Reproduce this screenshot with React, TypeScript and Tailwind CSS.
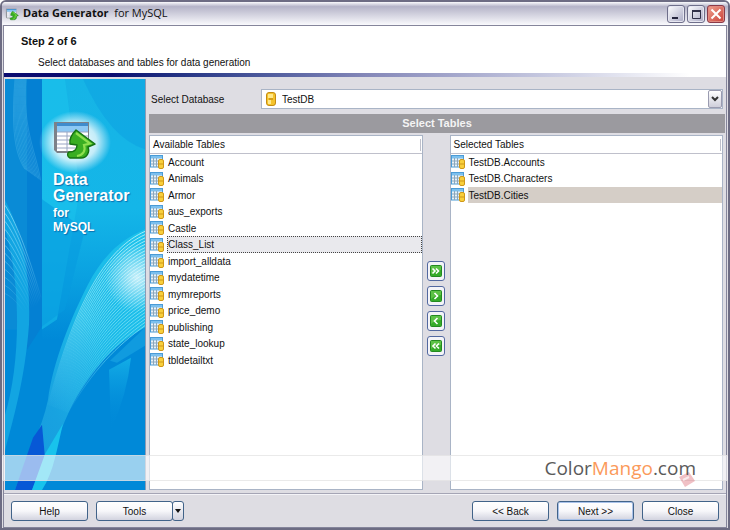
import React, { useState } from "react";

const availableTables = [
  "Account",
  "Animals",
  "Armor",
  "aus_exports",
  "Castle",
  "Class_List",
  "import_alldata",
  "mydatetime",
  "mymreports",
  "price_demo",
  "publishing",
  "state_lookup",
  "tbldetailtxt",
];

const selectedTables = ["TestDB.Accounts", "TestDB.Characters", "TestDB.Cities"];

// White table sheet with the green arrow, used in the title bar and the side banner
function ProductIcon({ className }: { className: string }) {
  return (
    <svg viewBox="0 0 46 40" className={className} aria-hidden="true">
      <path d="M3 3h35v31H6l-3-3z" fill="#7d8188" />
      <path d="M6 4h31v28H6z" fill="#fff" />
      <path d="M6 4h31v9H6z" fill="#8cc8f4" />
      <path d="M6 4h31v3H6z" fill="#3f8ccd" />
      <path d="M6 13h31M6 17h31M6 21h31M6 25h31M6 29h31M16 13v19M27 13v19" stroke="#9aa6c4" strokeWidth="1" />
      <path
        d="M25 11L44 25L37 28C39 33 36 39 30 39H19C16 38 16 34 18 33C23 33 26 31 26 26L19 25C18 19 21 15 25 11Z"
        fill="#39ae22"
        stroke="#167312"
        strokeWidth="1.4"
        strokeLinejoin="round"
      />
      <path d="M25 14L39 24.500L33 26C35 32 32 36 26 37" fill="none" stroke="#8fe050" strokeWidth="2.2" />
    </svg>
  );
}

function DbIcon() {
  return (
    <svg viewBox="0 0 10 14" className="h-3.5 w-2.5" aria-hidden="true">
      <rect x=".5" y=".5" width="9" height="13" rx="2.5" fill="#f5c32c" stroke="#c48b12" />
      <path d="M2 2h5v4H2zM2 8h3v4H2z" fill="#ffe88a" />
      <path d="M3 7h4" stroke="#b57b0c" />
    </svg>
  );
}

function TableIcon() {
  return (
    <svg viewBox="0 0 14 14" className="h-3.5 w-3.5 shrink-0" aria-hidden="true">
      <rect x=".5" y=".5" width="12" height="11.5" fill="#e9f2f8" stroke="#4a9bd6" />
      <path d="M1 1h11v2.500H1z" fill="#7cc0ee" />
      <path d="M1 6h11M1 9h11M3.500 3v9M6.500 3v9" stroke="#8aa7bd" />
      <rect x="8.500" y="4.500" width="5" height="9" rx="1.5" fill="#f8cf3c" stroke="#cf9718" />
      <path d="M9 9h4" stroke="#cf9718" />
    </svg>
  );
}

function BannerArt() {
  const fan = Array.from({ length: 30 }, (_, i) => i / 29);
  const left = Array.from({ length: 12 }, (_, i) => i);
  return (
    <svg viewBox="0 0 140 410" preserveAspectRatio="none" className="absolute inset-0 h-full w-full" aria-hidden="true">
      <defs>
        <linearGradient id="sky" x1="0" y1="0" x2="0" y2="1">
          <stop offset="0" stopColor="#16b4e6" />
          <stop offset=".5" stopColor="#14b6e8" />
          <stop offset=".75" stopColor="#0aa2e1" />
          <stop offset="1" stopColor="#0089d8" />
        </linearGradient>
        <linearGradient id="swoosh" x1="1" y1="0" x2="0" y2="1">
          <stop offset="0" stopColor="#1cc3ec" />
          <stop offset=".4" stopColor="#1ab9e8" />
          <stop offset=".7" stopColor="#18a2e0" />
          <stop offset="1" stopColor="#1598df" />
        </linearGradient>
        <linearGradient id="strand" gradientUnits="userSpaceOnUse" x1="140" y1="160" x2="50" y2="335">
          <stop offset="0" stopColor="#c8f6fc" />
          <stop offset=".5" stopColor="#6cdcf4" />
          <stop offset="1" stopColor="#4ac0ee" stopOpacity="0" />
        </linearGradient>
        <linearGradient id="leftStrand" gradientUnits="userSpaceOnUse" x1="0" y1="130" x2="36" y2="225">
          <stop offset="0" stopColor="#7fd6f6" />
          <stop offset="1" stopColor="#7fd6f6" stopOpacity="0" />
        </linearGradient>
        <linearGradient id="fade" x1="0" y1="0" x2="0" y2="1">
          <stop offset="0" stopColor="#18b6ea" />
          <stop offset="1" stopColor="#0089d8" stopOpacity="0" />
        </linearGradient>
        <radialGradient id="glow">
          <stop offset="0" stopColor="#fff" />
          <stop offset=".6" stopColor="#fff" stopOpacity=".75" />
          <stop offset="1" stopColor="#fff" stopOpacity="0" />
        </radialGradient>
        <radialGradient id="shine">
          <stop offset="0" stopColor="#fff" stopOpacity=".75" />
          <stop offset="1" stopColor="#fff" stopOpacity="0" />
        </radialGradient>
      </defs>
      <rect width="140" height="410" fill="#0089d8" />
      <rect x="37" width="103" height="260" fill="url(#sky)" />
      <path d="M37 0H60L75 110L52 240L37 250Z" fill="#1cc6ed" opacity=".5" />
      <path d="M78 0H140V70Q105 60 78 0Z" fill="#0a9ee1" opacity=".45" />
      <path d="M37 120L80 150L60 230L37 247Z" fill="#079be0" opacity=".6" />
      <rect width="22" height="250" fill="#0a8bd6" />
      <path d="M22 0H37V247L22 270Z" fill="#0480d3" />
      <path d="M0 121C14 145 26 190 24 245C20 300 8 340 0 371V335C14 290 18 210 0 150Z" fill="#12a5e2" />
      <g fill="none" stroke="#6fd0f2" strokeWidth=".6">
        {left.map((i) => (
          <path key={i} opacity=".45" d={`M${10 + i} 0C${6 + i} 50 ${10 + i * 2} 75 ${20 + i * 1.4} ${90 + i}`} />
        ))}
      </g>
      <g fill="none" stroke="url(#leftStrand)" strokeWidth=".9">
        {left.map((i) => (
          <path key={i} d={`M0 ${126 + i * 8}C10 ${141 + i * 7} 22 ${170 + i * 6} ${36 - i} ${218 + i * 2}`} />
        ))}
      </g>
      <path
        d="M140 150C112 162 96 180 83 205C66 238 48 282 43 320C37 350 20 380 10 410H28C44 388 53 355 64 332C82 295 108 264 140 248Z"
        fill="url(#swoosh)"
      />
      <g fill="none" stroke="url(#strand)" strokeWidth=".8">
        {fan.map((t) => (
          <path
            key={t}
            d={`M140 ${152 + t * 94}C${104 + t * 8} ${168 + t * 98} ${72 + t * 16} ${215 + t * 75} ${43 + t * 20} ${325 + t * 8}`}
          />
        ))}
      </g>
      <ellipse cx="132" cy="198" rx="32" ry="34" fill="url(#shine)" />
      <path d="M140 248L105 281L112 283L140 266Z" fill="#109bdf" />
      <path d="M104 290L126 278Q122 315 106 350Z" fill="url(#fade)" opacity=".8" />
      <path d="M37 345L28 358L10 410H27L40 378Z" fill="#0758d6" />
      <path d="M58 344L40 374L27 410H37C49 392 52 368 58 344Z" fill="#18c3ec" />
      <ellipse cx="70" cy="63" rx="36" ry="31" fill="url(#glow)" />
    </svg>
  );
}

function TableList({ title, items, current, onPick, muted }: {
  title: string;
  items: string[];
  current: string;
  onPick: (name: string) => void;
  muted?: boolean;
}) {
  const active = muted ? "bg-[#d5cec7]" : "bg-[#e9e9ed] outline-1 -outline-offset-1 outline-dotted outline-[#444]";
  return (
    <section className="flex min-w-0 flex-1 flex-col border border-[#a9b4c6] bg-white text-[10px]">
      <h2 className="flex h-[18px] shrink-0 items-center justify-between border-b border-[#bfc0cb] pr-px pl-[3px]">
        {title}
        <span className="h-3 w-px bg-[#bfc0cb]" />
      </h2>
      <ul>
        {items.map((name) => (
          <li key={name} className="h-4 even:h-[17px]">
            <button type="button" onClick={() => onPick(name)} className="flex h-full w-full items-center gap-[3px] text-left">
              <TableIcon />
              <span className={`flex h-full flex-1 items-center pl-px ${name === current ? active : ""}`}>{name}</span>
            </button>
          </li>
        ))}
      </ul>
    </section>
  );
}

function MoveButton({ label, path }: { label: string; path: string }) {
  return (
    <button
      type="button"
      aria-label={label}
      className="flex h-5 w-[18px] items-center justify-center rounded-[3px] border border-[#5268a0] bg-[#f4f4f8]"
    >
      <svg viewBox="0 0 12 12" className="h-3 w-3" aria-hidden="true">
        <rect x=".5" y=".5" width="11" height="11" rx="1" fill="#35ab29" stroke="#238a20" />
        <path d="M1 1h10v4Q5 5 1 9z" fill="#5cc246" />
        <path d={path} fill="none" stroke="#fff" strokeWidth="1.6" />
      </svg>
    </button>
  );
}

const footerButton =
  "h-5 w-[77px] rounded-[3px] border border-[#416389] bg-linear-to-b from-white via-[#f7f7fa] to-[#d2d3df] text-[10px]";

export default function App() {
  const [available, setAvailable] = useState("Class_List");
  const [selected, setSelected] = useState("TestDB.Cities");

  return (
    <div className="relative flex min-h-screen flex-col rounded-t-md border-2 border-[#6d6c83] bg-[#dedde3] font-['Liberation_Sans',sans-serif] text-[10px] text-[#111]">
      <header className="flex h-[23px] shrink-0 items-center gap-1 rounded-t bg-linear-to-b from-[#fafafc] via-[#b5b4c8] via-20% to-[#fafafd] pr-[3px] pl-[3px]">
        <ProductIcon className="h-3.5 w-3.5" />
        <h1 className="flex-1 font-['Open_Sans',sans-serif] text-[11px] whitespace-pre">
          <b>Data Generator</b>
          {"  for MySQL"}
        </h1>
        <div className="flex gap-0.5">
          <button type="button" aria-label="Minimize" className="flex h-[18px] w-[18px] rounded-[3px] border border-[#6f6f8b] bg-linear-to-br from-white to-[#a9a9c4] shadow-[inset_0_0_0_1px_#e6e6f0]">
            <svg viewBox="0 0 16 16" aria-hidden="true">
              <path d="M4 12h6" stroke="#24243c" strokeWidth="2" />
            </svg>
          </button>
          <button type="button" aria-label="Maximize" className="flex h-[18px] w-[18px] rounded-[3px] border border-[#6f6f8b] bg-linear-to-br from-white to-[#a9a9c4] shadow-[inset_0_0_0_1px_#e6e6f0]">
            <svg viewBox="0 0 16 16" aria-hidden="true">
              <path d="M4.500 4.500h8v8h-8z" fill="none" stroke="#303048" />
              <path d="M4 5h9" stroke="#303048" strokeWidth="2" />
            </svg>
          </button>
          <button type="button" aria-label="Close window" className="flex h-[18px] w-[18px] rounded-[3px] border border-[#8b3a48] bg-linear-to-br from-[#efa090] to-[#c83c38] shadow-[inset_0_0_0_1px_#e08a80]">
            <svg viewBox="0 0 16 16" aria-hidden="true">
              <path d="M3.500 3.500l9 9M12.500 3.500l-9 9" stroke="#fff" strokeWidth="2" />
            </svg>
          </button>
        </div>
      </header>

      <div className="mx-px flex flex-1 flex-col border border-t-0 border-[#85859b]">
        <div className="h-12 shrink-0 border-t border-[#85859b] bg-white pt-2 pl-[17px]">
          <p className="text-[11px] leading-[14px] font-bold">Step 2 of 6</p>
          <p className="mt-2 pl-[17px] leading-[14px]">Select databases and tables for data generation</p>
        </div>
        <div className="h-1 shrink-0 bg-linear-to-r from-[#0c0c70] from-15% via-[#8487b8] via-50% to-white to-95%" />

        <main className="flex flex-1 gap-[3px] border-b border-[#a5a5b5] p-px pt-0.5 pb-[3px]">
          <aside className="relative w-[141px] shrink-0 border-r border-[#8b9bb5] px-[46px] pt-10 font-bold text-white">
            <BannerArt />
            <div className="relative w-20 [text-shadow:1px_1px_1px_#0870b0]">
              <ProductIcon className="h-10 w-[46px]" />
              <p className="mt-[13px] pl-0.5 text-[16px] leading-4">
                Data
                <br />
                Generator
              </p>
              <p className="mt-0.5 pl-0.5 text-[12px] leading-[14px]">
                for
                <br />
                MySQL
              </p>
            </div>
          </aside>

          <div className="flex min-w-0 flex-1 flex-col pt-2.5">
            <div className="flex items-center pr-0.5">
              <label htmlFor="database" className="w-28 pl-0.5">
                Select Database
              </label>
              <div className="relative flex-1">
                <select
                  id="database"
                  className="block h-5 w-full appearance-none border border-[#a9b4c6] bg-white pl-5 text-[10px]"
                >
                  <option>TestDB</option>
                </select>
                <span className="pointer-events-none absolute top-[3px] left-[5px]">
                  <DbIcon />
                </span>
                <span className="pointer-events-none absolute top-px right-px flex h-[18px] w-3.5 items-center justify-center rounded-xs border border-[#9a9bb0] bg-linear-to-b from-white to-[#cfcfdb]">
                  <svg viewBox="0 0 8 6" className="w-2" aria-hidden="true">
                    <path d="M1 1l3 3 3-3" fill="none" stroke="#333" strokeWidth="2" />
                  </svg>
                </span>
              </div>
            </div>

            <h2 className="mt-[5px] flex h-[19px] items-center justify-center bg-[#9b9a9f] text-[11px] font-bold text-[#f4f4f4]">
              Select Tables
            </h2>

            <div className="mt-0.5 flex flex-1 pr-0.5">
              <TableList title="Available Tables" items={availableTables} current={available} onPick={setAvailable} />
              <div className="flex w-[27px] shrink-0 flex-col items-center gap-[5px] pt-[126px]">
                <MoveButton label="Add all tables" path="M2.500 3.500L5 6L2.500 8.500M6 3.500L8.500 6L6 8.500" />
                <MoveButton label="Add table" path="M4.500 3L7.500 6L4.500 9" />
                <MoveButton label="Remove table" path="M7.500 3L4.500 6L7.500 9" />
                <MoveButton label="Remove all tables" path="M5.500 3.500L3 6L5.500 8.500M9 3.500L6.500 6L9 8.500" />
              </div>
              <TableList title="Selected Tables" items={selectedTables} current={selected} onPick={setSelected} muted />
            </div>
          </div>
        </main>

        <footer className="flex h-[33px] shrink-0 items-center border-t border-[#f4f4f8] px-[7px]">
          <button type="button" className={footerButton}>Help</button>
          <button type="button" className={`${footerButton} ml-2`}>Tools</button>
          <button type="button" aria-label="More tools" className="-ml-px flex h-5 w-3 items-center justify-center rounded-[3px] border border-[#416389] bg-linear-to-b from-white to-[#d2d3df]">
            <svg viewBox="0 0 6 4" className="w-1.5" aria-hidden="true">
              <path d="M0 0h6L3 4z" fill="#111" />
            </svg>
          </button>
          <div className="ml-auto flex gap-2">
            <button type="button" className={footerButton}>&lt;&lt; Back</button>
            <button type="button" className={`${footerButton} shadow-[inset_0_0_0_1px_#a9c2ea]`}>Next &gt;&gt;</button>
            <button type="button" className={footerButton}>Close</button>
          </div>
        </footer>
      </div>

      <div className="pointer-events-none absolute inset-x-0 bottom-[47px] flex h-[26px] items-center justify-end border-y border-[#dcdcdc]/60 bg-white/60 pr-8 font-['Open_Sans',sans-serif] text-[19px] text-[#5a5a5a]">
        <svg viewBox="0 0 18 16" className="absolute right-8 -bottom-2 h-4 w-[18px]" aria-hidden="true">
          <path d="M1 5L11 0L17 9L7 15Z" fill="#d44a5a" opacity=".35" />
          <path d="M5 8L11 5" stroke="#fff" strokeWidth="2" opacity=".7" />
        </svg>
        <span className="relative">
          Color<span className="text-[#fb9a5b]">Mango</span>.com
        </span>
      </div>
    </div>
  );
}
